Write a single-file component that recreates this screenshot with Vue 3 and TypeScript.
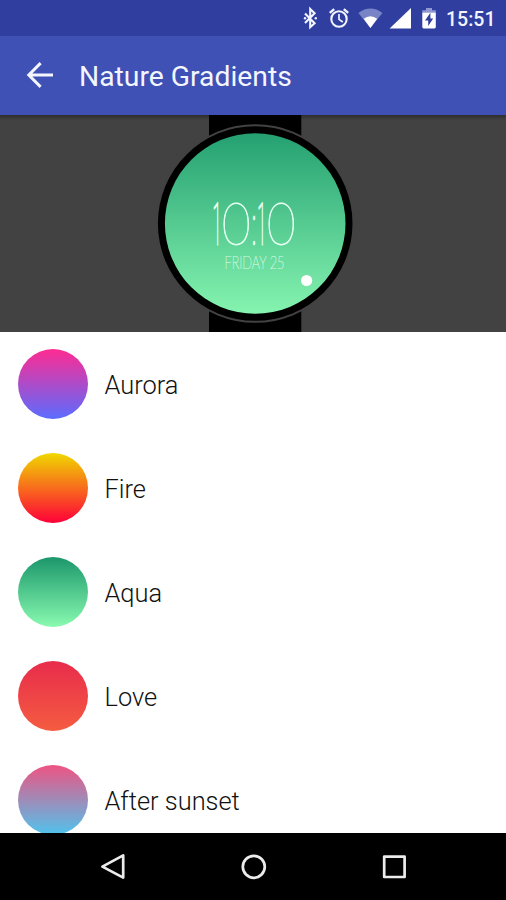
<script setup lang="ts">
interface GradientItem {
  name: string
  from: string
  to: string
}

const gradients: GradientItem[] = [
  { name: 'Aurora', from: '#ff2b91', to: '#5b6cff' },
  { name: 'Fire', from: '#f0d800', to: '#ff0038' },
  { name: 'Aqua', from: '#1c976b', to: '#88fab0' },
  { name: 'Love', from: '#e82c4c', to: '#f55c40' },
  { name: 'After sunset', from: '#ee5382', to: '#4fc4ee' },
]
</script>

<template>
  <div class="screen">
    <header class="status-bar">
      <svg class="status-icons" viewBox="0 0 146 36" aria-hidden="true">
        <g fill="none" stroke="#f2f4ff" stroke-width="2.1">
          <path d="M5 13.4 L14.6 23.2 L10.2 27.2 V9 L14.6 13.2 L5 23" />
          <circle cx="39" cy="19" r="7.7" />
          <path d="M39 14 V19.4 L42.8 22" stroke-width="1.7" />
          <path d="M29.8 12.8 L34.2 9.1 M48.2 12.8 L43.8 9.1" stroke-width="2.4" />
        </g>
        <g fill="#f2f4ff">
          <circle cx="5" cy="18.2" r="1.2" />
          <circle cx="15.8" cy="18.2" r="1.2" />
        </g>
        <path d="M58.4 13 Q70.5 4.2 82.4 13 L70.4 28 Z" fill="#7984c6" />
        <path d="M63.7 18.8 Q70.4 13.6 77.2 18.8 L70.4 28 Z" fill="#fff" />
        <path d="M111 8 V28.6 H89.6 Z" fill="#fff" />
        <path d="M122.3 12.6 V10.2 H126 V8 H132 V10.2 H135.8 V12.6 Z" fill="#8f98d0" />
        <path d="M122.3 12.4 H135.8 V27 Q135.8 28.4 134.4 28.4 H123.7 Q122.3 28.4 122.3 27 Z" fill="#fff" />
        <path d="M130.4 12.8 L125 20.5 H128.2 V26 L133.2 18.4 H130.4 Z" fill="#303f9f" />
      </svg>
      <span class="clock">15:51</span>
    </header>

    <div class="app-bar">
      <svg class="back" viewBox="0 0 28 28" aria-hidden="true">
        <path d="M27 14 H3 M14.6 2.1 L2.8 14 L14.6 25.9" fill="none" stroke="#f4f6ff" stroke-width="3" />
      </svg>
      <h1>Nature Gradients</h1>
    </div>

    <section class="preview">
      <svg class="watch" viewBox="0 0 506 217">
        <defs>
          <linearGradient id="face" x1="0" y1="0" x2="0" y2="1">
            <stop offset="0" stop-color="#24a071" />
            <stop offset="1" stop-color="#86f4b0" />
          </linearGradient>
          <linearGradient id="shade" x1="0" y1="0" x2="0" y2="1">
            <stop offset="0" stop-color="#000" stop-opacity=".3" />
            <stop offset="1" stop-color="#000" stop-opacity="0" />
          </linearGradient>
        </defs>
        <rect x="209" y="0" width="92.3" height="217" fill="#000" />
        <circle cx="255.2" cy="108.5" r="99.3" fill="#424242" />
        <circle cx="255.2" cy="108.5" r="97.3" fill="#000" />
        <circle cx="255.2" cy="108.5" r="90.3" fill="url(#face)" />
        <g class="face-text">
          <text class="time" y="130"><tspan class="one" x="212.6" textLength="9" lengthAdjust="spacingAndGlyphs">1</tspan><tspan x="221.8" textLength="29" lengthAdjust="spacingAndGlyphs">0</tspan><tspan x="251" textLength="6" lengthAdjust="spacingAndGlyphs">:</tspan><tspan class="one" x="257.3" textLength="9" lengthAdjust="spacingAndGlyphs">1</tspan><tspan x="266.8" textLength="29" lengthAdjust="spacingAndGlyphs">0</tspan></text>
          <text class="date" x="224.5" y="154.2" textLength="60" lengthAdjust="spacingAndGlyphs">FRIDAY 25</text>
        </g>
        <circle cx="306.6" cy="165.5" r="5.6" fill="#fff" />
        <rect width="506" height="5" fill="url(#shade)" />
      </svg>
    </section>

    <ul class="list">
      <li v-for="item in gradients" :key="item.name">
        <span class="swatch" :style="{ backgroundImage: `linear-gradient(${item.from}, ${item.to})` }"></span>
        <span class="name">{{ item.name }}</span>
      </li>
    </ul>

    <nav class="nav-bar">
      <svg viewBox="0 0 506 67" aria-hidden="true">
        <g fill="none" stroke="#ececec" stroke-width="2.7" stroke-linejoin="round">
          <path d="M123.2 22.4 V44.6 L102.4 33.6 Z" />
          <circle cx="253.8" cy="33.8" r="11" />
          <rect x="384.2" y="23.6" width="20.4" height="20.4" />
        </g>
      </svg>
    </nav>
  </div>
</template>

<style>
body {
  margin: 0;
}
</style>

<style scoped>
.screen {
  display: flex;
  flex-direction: column;
  width: 506px;
  height: 900px;
  overflow: hidden;
  background: #fff;
  font-family: Roboto, "Liberation Sans", sans-serif;
}
.status-bar {
  flex: none;
  display: flex;
  align-items: center;
  height: 36px;
  padding-left: 300px;
  background: #303f9f;
}
.status-icons {
  flex: none;
  width: 146px;
  height: 36px;
}
.clock {
  color: #f2f4ff;
  font-size: 19.5px;
  font-weight: 500;
  line-height: 36px;
  padding-top: 3px;
}
.app-bar {
  flex: none;
  display: flex;
  align-items: center;
  gap: 25px;
  height: 78.5px;
  padding-left: 26px;
  background: #3f51b5;
}
.back {
  width: 28px;
  height: 28px;
}
h1 {
  margin: 0;
  padding-top: 4px;
  color: #f4f6ff;
  font-size: 28.3px;
  font-weight: 400;
  line-height: 40px;
}
.preview {
  flex: none;
  height: 217px;
  background: #424242;
}
.watch {
  display: block;
  width: 506px;
  height: 217px;
}
.face-text {
  fill: #e4fff0;
  stroke: #e4fff0;
}
.time {
  font-family: Lato, Roboto, sans-serif;
  font-size: 59px;
  font-weight: 100;
  stroke-width: 0.8px;
}
.one {
  font-family: Roboto, sans-serif;
  stroke-width: 1.5px;
}
.date {
  font-family: Lato, Roboto, sans-serif;
  font-size: 17px;
  font-weight: 100;
  stroke-width: 0.2px;
}
.list {
  flex: 1;
  min-height: 0;
  margin: 0;
  padding: 0.5px 0 0;
  list-style: none;
  overflow: hidden;
}
li {
  display: flex;
  align-items: center;
  gap: 17px;
  height: 104.1px;
  padding-left: 17.5px;
}
.swatch {
  width: 70px;
  height: 70px;
  border-radius: 50%;
}
.name {
  padding-top: 2px;
  color: #111;
  font-size: 25.4px;
  font-weight: 300;
  line-height: 36px;
}
.nav-bar {
  flex: none;
  height: 67px;
  background: #000;
}
.nav-bar svg {
  display: block;
  width: 506px;
  height: 67px;
}
</style>
